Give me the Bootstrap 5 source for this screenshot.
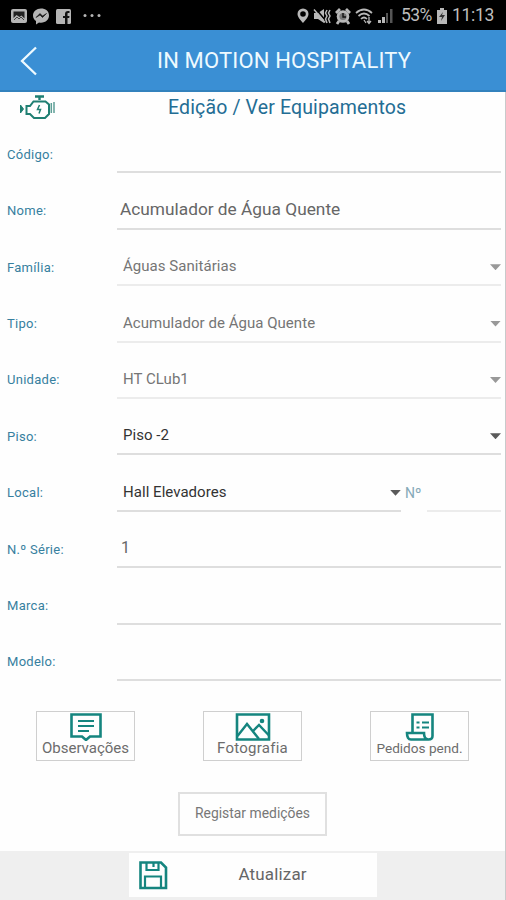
<!DOCTYPE html>
<html lang="pt">
<head>
<meta charset="utf-8">
<meta name="viewport" content="width=device-width, initial-scale=1">
<title>In Motion Hospitality</title>
<link href="https://cdn.jsdelivr.net/npm/bootstrap@5.3.0/dist/css/bootstrap.min.css" rel="stylesheet">
<style>
body{font-family:Roboto,"Liberation Sans",sans-serif;background:#fefefe;line-height:1.2;color:#666}
.screen{height:900px;overflow:hidden}
.statusbar{height:30px;background:#000;color:#bdbdbd;padding:1px 12px 0 11px}
.statusbar .txt{font-size:17.5px;letter-spacing:-.5px}
.statusbar .clock{letter-spacing:-.3px}
.appbar{height:62px;background:#3a8fd4;border-bottom:2px solid #3382bd;color:#eefaff;padding-top:2px}
.appbar .back{width:62px;padding-left:20px}
.appbar .ttl{font-size:22px;padding-left:95px;letter-spacing:.16px}
.edge{border-right:1px solid #c8cacb}
.subttl{height:25px;color:#236d94}
.subttl .engine{width:168px;padding-left:18px}
.subttl .txt{font-size:19.5px;padding-top:4px;letter-spacing:.14px}
.field{height:56.4px}
.field .lbl{width:117px;padding:0 0 11px 7px;font-size:13px;letter-spacing:.28px;color:#37809f}
.val{border-bottom:2px solid #dedede;height:100%;padding:0 0 9px 6px;font-size:15px;letter-spacing:.04px;color:#757575}
.val.entry{font-size:17.3px;padding-left:3px;padding-bottom:8px;letter-spacing:0;color:#666}
.val.entry.serial{font-size:16px;padding-left:4px;padding-bottom:9px}
.val.soft{border-color:#ececec}
.val.active{color:#333}
.val .caret{width:11px;height:6px;background:#999;clip-path:polygon(0 0,100% 0,50% 100%);margin-bottom:5px}
.val.active .caret{background:#5a5a5a}
.num{font-size:14px;color:#86a9b8;width:26px;padding:0 0 10px 4px}
.num-line{width:74px}
.tiles{padding:30px 36px 0}
.tile{width:99px;height:50px;border:1px solid #cfcfcf;border-radius:0;background:#fefefe;color:#6c6c6c}
.tile .cap{font-size:15px;line-height:15px}
.tile .cap-foto{letter-spacing:.25px}
.tile .cap-ped{font-size:13.6px}
.mid{margin-top:31px}
.measure{width:149px;height:44px;border:2px solid #e0e0e0;border-radius:0;font-size:13.9px;color:#777}
.foot{height:49px;background:#efefef;padding-top:2px}
.save{width:248px;height:44px;background:#fefefe;border-radius:0;color:#666;font-size:17px}
.save-txt{margin-left:71px;letter-spacing:.15px}
</style>
</head>
<body>
<div class="screen d-flex flex-column">
  <header>
    <div class="statusbar d-flex align-items-center justify-content-between">
      <div class="d-flex align-items-center">
        <svg width="92" height="20" viewBox="0 0 92 20" fill="#b5b5b5">
          <rect x="0" y="3" width="16" height="14" rx="2"/><path d="M2.500 5.500h11v7l-3-3-2 1.500-3-2-3 3z" fill="#222"/><path d="M3 14l3-3 2 2 2-2 3 3" fill="none" stroke="#444"/>
          <path d="M30 2.500c-4.500 0-8 3-8 7 0 2.300 1 4.200 3 5.500v3.500l3-2c6 1 10-2.500 10-7s-3.500-7-8-7z"/><path d="M25 11.500l4-4 2.500 2.500 4-2.500-4 4-2.500-2.500z" fill="#111" stroke="#111" stroke-width=".6"/>
          <rect x="45" y="3" width="15" height="15" rx="1.500"/><path d="M54 18v-6h-2v-2h2V8c0-2 1-3 3-3h1.500v2H57.500c-1 0-1 .5-1 1v2h2l-.3 2h-1.700v6z" fill="#111"/>
          <circle cx="74" cy="9.500" r="1.500"/><circle cx="81" cy="9.500" r="1.500"/><circle cx="88" cy="9.500" r="1.500"/>
        </svg>
      </div>
      <div class="d-flex align-items-center">
        <svg class="me-2" width="96" height="20" viewBox="0 0 96 20" fill="#b8b8b8">
          <path fill-rule="evenodd" d="M6 2.500a5.500 5.500 0 0 0-5.500 5.500c0 3.500 5.500 9 5.500 9s5.500-5.500 5.500-9a5.500 5.500 0 0 0-5.500-5.500zm0 2.700a2.800 2.800 0 1 1 0 5.600 2.800 2.800 0 0 1 0-5.600z"/>
          <path d="M17 7h4l6-4v14l-6-4h-4z"/><path d="M18 2l11 13" stroke="#000" stroke-width="1.600"/><path d="M17 3.500l11 13M30 4l-1.500 3 1.500 3-1.500 3 1.500 4M33 4l-1.500 3 1.500 3-1.500 3 1.500 4" stroke="#b8b8b8" stroke-width="1.500" fill="none"/>
          <circle cx="46" cy="10.500" r="6.300"/><path d="M39 7l4-4M49 3l4 4M42 15l-2 3M50 15l2 3" stroke="#b8b8b8" stroke-width="2.800"/><circle cx="46" cy="10.500" r="3.600" fill="#777"/><path d="M46 7v4h3" stroke="#111" stroke-width="1.400" fill="none"/>
          <path d="M59 7q8-7 16 0M61.500 10q5.500-5 11 0M64 13q3-3 6 0" stroke="#b8b8b8" stroke-width="1.700" fill="none"/><path d="M67 14l2 3M72 11v6M70 15l2 2.500 2-2.500" stroke="#b8b8b8" stroke-width="1.300" fill="none"/>
          <path d="M81 17v-3h3v3zM85 17v-6h3v6z"/><path d="M89 17V7h2v10zM93 17V3h2.500v14z" fill="#555"/>
        </svg>
        <span class="txt">53%</span>
        <svg class="mx-1" width="12" height="18" viewBox="0 0 12 18"><path d="M1 3h3V1h4v2h3v14H1z" fill="#b8b8b8"/><path d="M7 5l-4 5h3l-1 4 4-6H6z" fill="#333"/></svg>
        <span class="txt clock">11:13</span>
      </div>
    </div>
    <div class="appbar d-flex align-items-center">
      <div class="back"><svg width="18" height="30" viewBox="0 0 18 30" fill="none" stroke="#eefaff" stroke-width="2.300"><path d="M16 1.500L2 15l14 13.500"/></svg></div>
      <div class="ttl text-nowrap">IN MOTION HOSPITALITY</div>
    </div>
  </header>
  <main class="edge flex-grow-1 d-flex flex-column">
    <div class="subttl d-flex">
      <div class="engine flex-shrink-0"><svg width="40" height="30" viewBox="0 0 40 30" fill="none" stroke="#1f7f72" stroke-width="2"><path d="M17 4.500h9M21.500 4v4" stroke-width="2.400"/><path d="M15.500 9.500H27.500l3.500 3V22l-4 4H16l-4-4H8.500V14H12z"/><path d="M2.500 13v8l3-4z" fill="#1f7f72" stroke-width="1"/><path d="M33.300 11v10M36 10v11" stroke-width="1.500" stroke="#5d9f96"/><path d="M21.500 13l-2 4.500h3l-1.500 4" stroke-width="1.500"/></svg></div>
      <div class="txt text-nowrap">Edição / Ver Equipamentos</div>
    </div>
    <div class="pe-1">
      <div class="field d-flex align-items-end"><div class="lbl">Código:</div><div class="val entry flex-grow-1"></div></div>
      <div class="field d-flex align-items-end"><div class="lbl">Nome:</div><div class="val entry flex-grow-1 d-flex align-items-end">Acumulador de Água Quente</div></div>
      <div class="field d-flex align-items-end"><div class="lbl">Família:</div><div class="val soft flex-grow-1 d-flex align-items-end justify-content-between">Águas Sanitárias<span class="caret"></span></div></div>
      <div class="field d-flex align-items-end"><div class="lbl">Tipo:</div><div class="val soft flex-grow-1 d-flex align-items-end justify-content-between">Acumulador de Água Quente<span class="caret"></span></div></div>
      <div class="field d-flex align-items-end"><div class="lbl">Unidade:</div><div class="val soft flex-grow-1 d-flex align-items-end justify-content-between">HT CLub1<span class="caret"></span></div></div>
      <div class="field d-flex align-items-end"><div class="lbl">Piso:</div><div class="val active flex-grow-1 d-flex align-items-end justify-content-between">Piso -2<span class="caret"></span></div></div>
      <div class="field d-flex align-items-end"><div class="lbl">Local:</div><div class="val active flex-grow-1 d-flex align-items-end justify-content-between">Hall Elevadores<span class="caret"></span></div><div class="num">Nº</div><div class="val soft num-line"></div></div>
      <div class="field d-flex align-items-end"><div class="lbl">N.º Série:</div><div class="val entry serial flex-grow-1 d-flex align-items-end">1</div></div>
      <div class="field d-flex align-items-end"><div class="lbl">Marca:</div><div class="val entry flex-grow-1"></div></div>
      <div class="field d-flex align-items-end"><div class="lbl">Modelo:</div><div class="val entry flex-grow-1"></div></div>
    </div>
    <div class="tiles d-flex justify-content-between">
      <button class="tile btn p-0 d-flex flex-column align-items-center">
        <svg width="34" height="29" viewBox="0 0 34 29" fill="none" stroke="#15857f" stroke-width="2.600"><path d="M2.500 2.500h29v22H21L17 28l-4-3.500H2.500z"/><path d="M9 9h16M9 14h16M9 19h11" stroke-width="2"/></svg>
        <span class="cap text-nowrap">Observações</span></button>
      <button class="tile btn p-0 d-flex flex-column align-items-center">
        <svg width="36" height="29" viewBox="0 0 36 29" fill="none" stroke="#15857f" stroke-width="2.600"><path d="M2 2.500h32v25H2z"/><path d="M2.500 24L12 12l12 15M18 19l6-6 10 10.500" stroke-width="2.400"/><circle cx="27" cy="9" r="2.300" fill="#15857f" stroke="none"/></svg>
        <span class="cap cap-foto text-nowrap">Fotografia</span></button>
      <button class="tile btn p-0 d-flex flex-column align-items-center">
        <svg width="30" height="29" viewBox="0 0 30 29" fill="none" stroke="#15857f" stroke-width="2.600"><path d="M7.500 20V2.500h20V24q0 3.500-4 3.500H6q-4 0-4-6.500h17q0 6.500 4.500 6.500"/><path d="M11.500 10.500h3M17 10.500h7M11.500 15.500h3M17 15.500h7" stroke-width="2"/></svg>
        <span class="cap cap-ped text-nowrap">Pedidos pend.</span></button>
    </div>
    <div class="d-flex justify-content-center mid"><button class="measure btn p-0 text-nowrap">Registar medições</button></div>
    <footer class="foot mt-auto d-flex justify-content-center">
      <button class="save btn p-0 d-flex align-items-center">
        <svg class="ms-2" width="30" height="30" viewBox="0 0 30 30" fill="none" stroke="#15857f" stroke-width="2.600"><path d="M2.500 2.500H23l5 5V28H2.500z"/><path d="M8.500 3v7h12V3M15.500 3v4M7 28V16.500h16V28" stroke-width="2.200"/></svg>
        <span class="save-txt">Atualizar</span></button>
    </footer>
  </main>
</div>
<script src="https://cdn.jsdelivr.net/npm/bootstrap@5.3.0/dist/js/bootstrap.bundle.min.js"></script>
</body>
</html>
